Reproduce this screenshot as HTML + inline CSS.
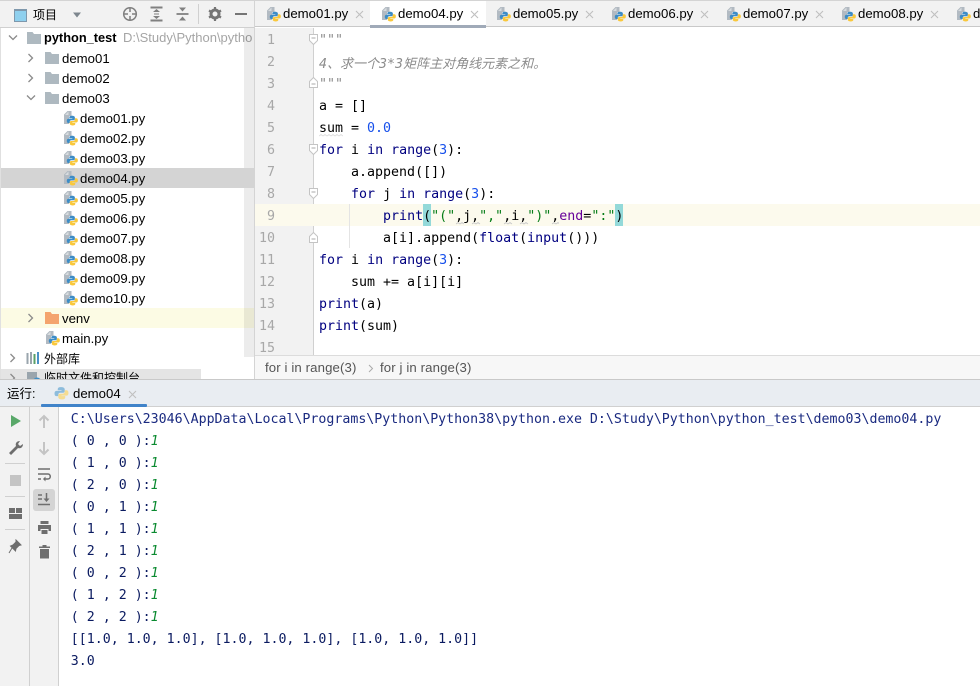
<!DOCTYPE html>
<html><head><meta charset="utf-8"><style>
html,body{margin:0;padding:0}
body{width:980px;height:686px;overflow:hidden;background:#fff;position:relative;font-family:"Liberation Sans","Noto Sans CJK SC",sans-serif;color:#000}
div,span.a,svg.a{position:absolute}
.t{font-size:13.2px;line-height:20px;white-space:nowrap;height:20px}
.m{font-family:"DejaVu Sans Mono",monospace;font-size:13.3px;line-height:22px;height:22px;white-space:pre;color:#000;margin-top:2px}
.con{font-size:13.27px;left:70.8px}
.n{font-family:"DejaVu Sans Mono",monospace;font-size:13.3px;line-height:22px;height:22px;color:#a8a8a8;width:20px;text-align:right;left:255px;margin-top:2px}
.k{color:#000080}.b{color:#1750eb}.g{color:#067d17}.p{color:#660099}
.cj{font-family:"Noto Sans CJK SC",sans-serif;font-size:13px}
.tab{font-size:13.2px;line-height:20px;top:4px;white-space:nowrap}
.o{color:#1a2a80}
.u{color:#0a1a60}
.u i{color:#0a8a30}
</style></head><body>
<svg width="0" height="0" style="position:absolute"><defs>
<symbol id="py" viewBox="0 0 16 16"><path d="M1 4.500L4.500 1H8.500V6H6V14H1z" fill="#b2bac2"/><path d="M5.500 1.500V5H2z" fill="#d8dcdf"/><g transform="translate(2.100 1.900) scale(.85)"><path d="M8 4.500c-2.500 0-3 1-3 2v1h3.500v.5H4c-1.500 0-2 1-2 2.500s.5 2.500 2 2.500h1.500v-1.500c0-1 .8-1.700 1.700-1.700h2.800c1 0 1.500-.7 1.500-1.500V6.500c0-1-1-2-3.500-2z" fill="#3c8cc6"/><path d="M8 4.500c-2.500 0-3 1-3 2v1h3.500v.5H4c-1.500 0-2 1-2 2.500s.5 2.500 2 2.500h1.500v-1.500c0-1 .8-1.700 1.700-1.700h2.800c1 0 1.500-.7 1.500-1.500V6.500c0-1-1-2-3.500-2z" fill="#f9c83c" transform="rotate(180 8.500 10.250)"/></g></symbol>
<symbol id="fd" viewBox="0 0 16 14"><path d="M1 1h5.500l1.500 2h7v10H1z" fill="#aeb9c0"/></symbol>
</defs></svg>

<!-- sidebar -->
<div style="left:0;top:0;width:255px;height:380px;background:#fff;overflow:hidden">
<div style="left:0;top:0;width:255px;height:27px;background:#f2f2f2;border-bottom:1px solid #d0d0d0"></div>
<div style="left:0;top:0;width:255px;height:1px;background:#d4d4d4"></div>
<div style="left:0;top:28px;width:1px;height:352px;background:#e0e0e0"></div>
<div style="left:14px;top:9px;width:11px;height:10px;background:#8fd0ee;border:1px solid #7f98ac;border-top-width:2px"></div>
<div class="t" style="left:33px;top:5px;font-size:12px">项目</div>
<svg class="a" style="left:72px;top:12px" width="10" height="6"><path d="M1 .5h8l-4 5z" fill="#7d868e"/></svg>
<svg class="a" style="left:122px;top:6px" width="16" height="16"><circle cx="8" cy="8" r="6.300" fill="none" stroke="#808080" stroke-width="1.500"/><path d="M8 2v4M8 10v4M2 8h4M10 8h4" stroke="#808080" stroke-width="1.500"/></svg>
<svg class="a" style="left:149px;top:6px" width="16" height="16"><path d="M1.500 1.500h12M1.500 14.500h12" stroke="#808080" stroke-width="2"/><path d="M4 6l3.500-3 3.500 3zM4 10l3.500 3 3.500-3z" fill="#808080"/><path d="M5 8h5" stroke="#808080"/></svg>
<svg class="a" style="left:175px;top:6px" width="16" height="16"><path d="M1.500 8h12" stroke="#808080" stroke-width="1.800"/><path d="M4 1.500l3.500 4 3.500-4zM4 14.500l3.500-4 3.500 4z" fill="#808080"/></svg>
<div style="left:198px;top:4px;width:1px;height:20px;background:#d0d0d0"></div>
<svg class="a" style="left:208px;top:6px" width="16" height="16"><circle cx="7" cy="8" r="4" fill="none" stroke="#757575" stroke-width="3"/><path d="M7 1v3M7 12v3M1 4.500l2.500 1.500M10.500 10l2.500 1.500M1 11.500L3.500 10M10.500 6L13 4.500" stroke="#757575" stroke-width="2.200"/></svg>
<div style="left:235px;top:13px;width:12px;height:2px;background:#757575"></div>

<div style="left:1px;top:308px;width:254px;height:20px;background:#fcfbe4"></div>
<div style="left:1px;top:369px;width:200px;height:11px;background:#e4e4e4"></div>

<svg class="a" style="left:8px;top:34px" width="10" height="8"><path d="M1 1.500l4 4 4-4" fill="none" stroke="#8b8b8b" stroke-width="1.300"/></svg>
<svg class="a" style="left:26px;top:31px" width="16" height="14"><use href="#fd"/></svg>
<div class="t" style="left:44px;top:28px;font-weight:bold;font-size:12.800px">python_test</div>
<div class="t" style="left:123px;top:28px;color:#a5a5a5;font-size:13px;width:130px;overflow:hidden">D:\Study\Python\pytho</div>

<svg class="a" style="left:27px;top:53px" width="8" height="10"><path d="M1.500 1l4 4-4 4" fill="none" stroke="#8b8b8b" stroke-width="1.300"/></svg>
<svg class="a" style="left:44px;top:51px" width="16" height="14"><use href="#fd"/></svg>
<div class="t" style="left:62px;top:49px">demo01</div>
<svg class="a" style="left:27px;top:73px" width="8" height="10"><path d="M1.500 1l4 4-4 4" fill="none" stroke="#8b8b8b" stroke-width="1.300"/></svg>
<svg class="a" style="left:44px;top:71px" width="16" height="14"><use href="#fd"/></svg>
<div class="t" style="left:62px;top:69px">demo02</div>
<svg class="a" style="left:26px;top:94px" width="10" height="8"><path d="M1 1.500l4 4 4-4" fill="none" stroke="#8b8b8b" stroke-width="1.300"/></svg>
<svg class="a" style="left:44px;top:91px" width="16" height="14"><use href="#fd"/></svg>
<div class="t" style="left:62px;top:89px">demo03</div>

<div style="left:244px;top:28px;width:11px;height:329px;background:rgba(0,0,0,.075)"></div>
<div style="left:1px;top:168px;width:254px;height:20px;background:#d4d4d4"></div>

<svg class="a" style="left:63px;top:110px" width="16" height="16"><use href="#py"/></svg><div class="t" style="left:80px;top:109px">demo01.py</div>
<svg class="a" style="left:63px;top:130px" width="16" height="16"><use href="#py"/></svg><div class="t" style="left:80px;top:129px">demo02.py</div>
<svg class="a" style="left:63px;top:150px" width="16" height="16"><use href="#py"/></svg><div class="t" style="left:80px;top:149px">demo03.py</div>
<svg class="a" style="left:63px;top:170px" width="16" height="16"><use href="#py"/></svg><div class="t" style="left:80px;top:169px">demo04.py</div>
<svg class="a" style="left:63px;top:190px" width="16" height="16"><use href="#py"/></svg><div class="t" style="left:80px;top:189px">demo05.py</div>
<svg class="a" style="left:63px;top:210px" width="16" height="16"><use href="#py"/></svg><div class="t" style="left:80px;top:209px">demo06.py</div>
<svg class="a" style="left:63px;top:230px" width="16" height="16"><use href="#py"/></svg><div class="t" style="left:80px;top:229px">demo07.py</div>
<svg class="a" style="left:63px;top:250px" width="16" height="16"><use href="#py"/></svg><div class="t" style="left:80px;top:249px">demo08.py</div>
<svg class="a" style="left:63px;top:270px" width="16" height="16"><use href="#py"/></svg><div class="t" style="left:80px;top:269px">demo09.py</div>
<svg class="a" style="left:63px;top:290px" width="16" height="16"><use href="#py"/></svg><div class="t" style="left:80px;top:289px">demo10.py</div>

<svg class="a" style="left:27px;top:313px" width="8" height="10"><path d="M1.500 1l4 4-4 4" fill="none" stroke="#8b8b8b" stroke-width="1.300"/></svg>
<svg class="a" style="left:44px;top:311px" width="16" height="14"><path d="M1 1h5.500l1.500 2h7v10H1z" fill="#f4a46e"/></svg>
<div class="t" style="left:62px;top:309px">venv</div>
<svg class="a" style="left:45px;top:330px" width="16" height="16"><use href="#py"/></svg><div class="t" style="left:62px;top:329px">main.py</div>

<svg class="a" style="left:9px;top:353px" width="8" height="10"><path d="M1.500 1l4 4-4 4" fill="none" stroke="#8b8b8b" stroke-width="1.300"/></svg>
<svg class="a" style="left:26px;top:351px" width="16" height="14"><path d="M1.500 2v11" stroke="#9aa5ad" stroke-width="2"/><path d="M5 1v12" stroke="#9aa5ad" stroke-width="2"/><path d="M8.500 3v10" stroke="#5aa06a" stroke-width="2"/><path d="M12 1v12" stroke="#4a90c8" stroke-width="2"/></svg>
<div class="t" style="left:44px;top:349px;font-size:12px">外部库</div>

<svg class="a" style="left:9px;top:373px" width="8" height="10"><path d="M1.500 1l4 4-4 4" fill="none" stroke="#8b8b8b" stroke-width="1.300"/></svg>
<svg class="a" style="left:26px;top:371px" width="16" height="14"><rect x="1" y="1" width="10" height="9" fill="#9aa5ad"/><circle cx="11" cy="11" r="4.500" fill="#3d8fc8"/></svg>
<div class="t" style="left:44px;top:368px;font-size:12px">临时文件和控制台</div>
</div>

<!-- editor tabs -->
<div style="left:255px;top:0;width:725px;height:25px;background:#f2f2f2;border-top:1px solid #d4d4d4;border-bottom:1px solid #c9c9c9"></div>
<div style="left:254px;top:0;width:1px;height:380px;background:#d4d4d4"></div>
<div style="left:370px;top:1px;width:116px;height:27px;background:#fff"></div>
<div style="left:370px;top:25px;width:116px;height:3px;background:#a0aab8"></div>

<svg class="a" style="left:266px;top:6px" width="16" height="16"><use href="#py"/></svg><div class="tab" style="left:283px">demo01.py</div>
<svg class="a" style="left:381px;top:6px" width="16" height="16"><use href="#py"/></svg><div class="tab" style="left:398px">demo04.py</div>
<svg class="a" style="left:496px;top:6px" width="16" height="16"><use href="#py"/></svg><div class="tab" style="left:513px">demo05.py</div>
<svg class="a" style="left:611px;top:6px" width="16" height="16"><use href="#py"/></svg><div class="tab" style="left:628px">demo06.py</div>
<svg class="a" style="left:726px;top:6px" width="16" height="16"><use href="#py"/></svg><div class="tab" style="left:743px">demo07.py</div>
<svg class="a" style="left:841px;top:6px" width="16" height="16"><use href="#py"/></svg><div class="tab" style="left:858px">demo08.py</div>
<svg class="a" style="left:956px;top:6px" width="16" height="16"><use href="#py"/></svg><div class="tab" style="left:973px">d</div>
<svg class="a" style="left:355px;top:10px" width="9" height="9"><path d="M1 1l7 7M8 1L1 8" stroke="#c0c0c0" stroke-width="1.100"/></svg>
<svg class="a" style="left:470px;top:10px" width="9" height="9"><path d="M1 1l7 7M8 1L1 8" stroke="#c0c0c0" stroke-width="1.100"/></svg>
<svg class="a" style="left:585px;top:10px" width="9" height="9"><path d="M1 1l7 7M8 1L1 8" stroke="#c0c0c0" stroke-width="1.100"/></svg>
<svg class="a" style="left:700px;top:10px" width="9" height="9"><path d="M1 1l7 7M8 1L1 8" stroke="#c0c0c0" stroke-width="1.100"/></svg>
<svg class="a" style="left:815px;top:10px" width="9" height="9"><path d="M1 1l7 7M8 1L1 8" stroke="#c0c0c0" stroke-width="1.100"/></svg>
<svg class="a" style="left:930px;top:10px" width="9" height="9"><path d="M1 1l7 7M8 1L1 8" stroke="#c0c0c0" stroke-width="1.100"/></svg>

<!-- editor -->
<div style="left:255px;top:28px;width:58px;height:327px;background:#f2f2f2"></div>
<div style="left:313px;top:28px;width:1px;height:327px;background:#d0d0d0"></div>
<div style="left:255px;top:204px;width:725px;height:22px;background:#fcfaed"></div>
<div style="left:423px;top:204px;width:8px;height:22px;background:#93d9d9"></div>
<div style="left:615px;top:204px;width:8px;height:22px;background:#93d9d9"></div>
<div style="left:349px;top:204px;width:1px;height:44px;background:#e4e4e4"></div>

<div class="n" style="top:28px">1</div><div class="n" style="top:50px">2</div><div class="n" style="top:72px">3</div><div class="n" style="top:94px">4</div><div class="n" style="top:116px">5</div><div class="n" style="top:138px">6</div><div class="n" style="top:160px">7</div><div class="n" style="top:182px">8</div><div class="n" style="top:204px">9</div><div class="n" style="top:226px">10</div><div class="n" style="top:248px">11</div><div class="n" style="top:270px">12</div><div class="n" style="top:292px">13</div><div class="n" style="top:314px">14</div><div class="n" style="top:336px">15</div>

<svg class="a" style="left:309px;top:34px" width="9" height="11"><path d="M.5.5h8v6l-4 4-4-4z" fill="#fff" stroke="#c4c4c4"/><path d="M2.500 4h4" stroke="#aaa"/></svg>
<svg class="a" style="left:309px;top:77px" width="9" height="11"><path d="M.5 10.500h8v-6l-4-4-4 4z" fill="#fff" stroke="#c4c4c4"/><path d="M2.500 7h4" stroke="#aaa"/></svg>
<svg class="a" style="left:309px;top:144px" width="9" height="11"><path d="M.5.5h8v6l-4 4-4-4z" fill="#fff" stroke="#c4c4c4"/><path d="M2.500 4h4" stroke="#aaa"/></svg>
<svg class="a" style="left:309px;top:188px" width="9" height="11"><path d="M.5.5h8v6l-4 4-4-4z" fill="#fff" stroke="#c4c4c4"/><path d="M2.500 4h4" stroke="#aaa"/></svg>
<svg class="a" style="left:309px;top:232px" width="9" height="11"><path d="M.5 10.500h8v-6l-4-4-4 4z" fill="#fff" stroke="#c4c4c4"/><path d="M2.500 7h4" stroke="#aaa"/></svg>

<div class="m" style="left:319px;top:28px;color:#8c8c8c;font-style:italic">"""</div>
<div class="m" style="left:319px;top:50px;color:#8c8c8c;font-style:italic">4<span class="cj">、求一个</span>3*3<span class="cj">矩阵主对角线元素之和。</span></div>
<div class="m" style="left:319px;top:72px;color:#8c8c8c;font-style:italic">"""</div>
<div class="m" style="left:319px;top:94px">a = []</div>
<div class="m" style="left:319px;top:116px">sum = <span class="b">0.0</span></div>
<div class="m" style="left:319px;top:138px"><span class="k">for</span> i <span class="k">in</span> <span class="k">range</span>(<span class="b">3</span>):</div>
<div class="m" style="left:319px;top:160px">    a.append([])</div>
<div class="m" style="left:319px;top:182px">    <span class="k">for</span> j <span class="k">in</span> <span class="k">range</span>(<span class="b">3</span>):</div>
<div class="m" style="left:319px;top:204px">        <span class="k">print</span>(<span class="g">"("</span>,j,<span class="g">","</span>,i,<span class="g">")"</span>,<span class="p">end</span>=<span class="g">":"</span>)</div>
<div class="m" style="left:319px;top:226px">        a[i].append(<span class="k">float</span>(<span class="k">input</span>()))</div>
<div class="m" style="left:319px;top:248px"><span class="k">for</span> i <span class="k">in</span> <span class="k">range</span>(<span class="b">3</span>):</div>
<div class="m" style="left:319px;top:270px">    sum += a[i][i]</div>
<div class="m" style="left:319px;top:292px"><span class="k">print</span>(a)</div>
<div class="m" style="left:319px;top:314px"><span class="k">print</span>(sum)</div>

<svg class="a" style="left:319px;top:134px" width="24" height="3"><path d="M0 2l2-1.500 2 1.500 2-1.500 2 1.500 2-1.500 2 1.500 2-1.500 2 1.500 2-1.500 2 1.500 2-1.500 2 1.500" fill="none" stroke="#dcdcdc" stroke-width=".8"/></svg>
<svg class="a" style="left:455px;top:222px" width="104" height="3" fill="none" stroke="#c8c8c8" stroke-width=".8"><path d="M1 2l2-1.500 2 1.500 2-1.500 2 1.500M17 2l2-1.500 2 1.500 2-1.500 2 1.500M49 2l2-1.500 2 1.500 2-1.500 2 1.500M65 2l2-1.500 2 1.500 2-1.500 2 1.500M97 2l2-1.500 2 1.500 2-1.500 2 1.500"/></svg>

<!-- breadcrumb -->
<div style="left:255px;top:355px;width:725px;height:24px;background:#f7f7f7;border-top:1px solid #dcdcdc;box-sizing:border-box"></div>
<div style="left:265px;top:358px;font-size:13.2px;letter-spacing:.12px;line-height:20px;color:#555;white-space:nowrap">for i in range(3)</div>
<svg class="a" style="left:368px;top:364px" width="6" height="9"><path d="M1 1l3.500 3.500L1 8" fill="none" stroke="#aaa"/></svg>
<div style="left:380px;top:358px;font-size:13.2px;letter-spacing:.12px;line-height:20px;color:#555;white-space:nowrap">for j in range(3)</div>

<!-- run -->
<div style="left:0;top:379px;width:980px;height:1px;background:#c9c9c9"></div>
<div style="left:0;top:380px;width:980px;height:26px;background:#e9edf2"></div>
<div style="left:0;top:406px;width:980px;height:1px;background:#d0d0d0"></div>
<div style="left:7px;top:384px;font-size:12.500px;line-height:20px;white-space:nowrap">运行:</div>
<svg class="a" style="left:54px;top:386px" width="15" height="15" viewBox="1.500 3.500 14 14"><path d="M8 4.500c-2.500 0-3 1-3 2v1h3.500v.5H4c-1.500 0-2 1-2 2.500s.5 2.500 2 2.500h1.500v-1.500c0-1 .8-1.700 1.700-1.700h2.800c1 0 1.500-.7 1.500-1.500V6.500c0-1-1-2-3.500-2z" fill="#8dbcdc"/><path d="M8 4.500c-2.500 0-3 1-3 2v1h3.500v.5H4c-1.500 0-2 1-2 2.500s.5 2.500 2 2.500h1.500v-1.500c0-1 .8-1.700 1.700-1.700h2.800c1 0 1.500-.7 1.500-1.500V6.500c0-1-1-2-3.500-2z" fill="#f4dc92" transform="rotate(180 8.500 10.250)"/></svg>
<div style="left:73px;top:384px;font-size:13.2px;line-height:20px">demo04</div>
<svg class="a" style="left:128px;top:390px" width="9" height="9"><path d="M1 1l7 7M8 1L1 8" stroke="#c0c0c0" stroke-width="1.100"/></svg>
<div style="left:41px;top:404px;width:106px;height:3px;background:#4083c9;border-radius:1px"></div>

<div style="left:0;top:407px;width:58px;height:279px;background:#f2f2f2"></div>
<div style="left:29px;top:407px;width:1px;height:279px;background:#d0d0d0"></div>
<div style="left:58px;top:407px;width:1px;height:279px;background:#d0d0d0"></div>
<svg class="a" style="left:10px;top:414px" width="12" height="14"><path d="M1 1l10 6-10 6z" fill="#59a869"/></svg>
<svg class="a" style="left:7px;top:439px" width="17" height="17"><path d="M2 14L9 7c-1-3 1-5 4-5l-2 3 2 2 3-2c0 3-2 5-5 4l-7 7z" fill="#6e6e6e"/></svg>
<div style="left:5px;top:463px;width:20px;height:1px;background:#d0d0d0"></div>
<div style="left:10px;top:475px;width:11px;height:11px;background:#c4c4c4"></div>
<div style="left:5px;top:496px;width:20px;height:1px;background:#d0d0d0"></div>
<svg class="a" style="left:9px;top:508px" width="13" height="11"><path d="M0 0h6v5H0zM7 0h6v5H7zM0 6h13v5H0z" fill="#6e6e6e"/></svg>
<div style="left:5px;top:529px;width:20px;height:1px;background:#d0d0d0"></div>
<svg class="a" style="left:7px;top:539px" width="16" height="16"><path d="M9 1l5 5-2 .5-3 3-.5 2.500-5-5L6 6l3-3zM5 9l-3 5" fill="#6e6e6e" stroke="#6e6e6e"/></svg>

<svg class="a" style="left:38px;top:414px" width="12" height="15"><path d="M6 14V2M1.500 6.500L6 2l4.500 4.500" fill="none" stroke="#c4c4c4" stroke-width="2"/></svg>
<svg class="a" style="left:38px;top:441px" width="12" height="15"><path d="M6 1v12M1.500 8.500L6 13l4.500-4.500" fill="none" stroke="#c4c4c4" stroke-width="2"/></svg>
<svg class="a" style="left:37px;top:467px" width="15" height="15"><path d="M1 2h12M1 7h10c3 0 3 5 0 5H7M1 12h3" fill="none" stroke="#6e6e6e" stroke-width="1.500"/><path d="M8.500 9.500L6 12l2.500 2.500z" fill="#6e6e6e"/></svg>
<div style="left:33px;top:489px;width:22px;height:22px;background:#d4d4d4;border-radius:3px"></div>
<svg class="a" style="left:37px;top:492px" width="15" height="15"><path d="M1 3h4M1 7h4M1 12.500h12" stroke="#6e6e6e" stroke-width="1.500"/><path d="M9.500 1v7" stroke="#6e6e6e" stroke-width="1.500"/><path d="M6.500 6.500h6L9.500 10z" fill="#6e6e6e"/></svg>
<svg class="a" style="left:37px;top:520px" width="15" height="15"><path d="M3.500 1h8v3h-8zM1 5h13v6h-2.500V9h-8v2H1zM4.500 10h6v4h-6z" fill="#6e6e6e"/></svg>
<svg class="a" style="left:38px;top:544px" width="13" height="15"><path d="M4.500 1h4v1.500H12V4H1V2.500h3.500zM2 5h9v9.500H2z" fill="#6e6e6e"/></svg>

<div class="m con o" style="top:407px">C:\Users\23046\AppData\Local\Programs\Python\Python38\python.exe D:\Study\Python\python_test\demo03\demo04.py</div>
<div class="m con u" style="top:429px">( 0 , 0 ):<i>1</i></div>
<div class="m con u" style="top:451px">( 1 , 0 ):<i>1</i></div>
<div class="m con u" style="top:473px">( 2 , 0 ):<i>1</i></div>
<div class="m con u" style="top:495px">( 0 , 1 ):<i>1</i></div>
<div class="m con u" style="top:517px">( 1 , 1 ):<i>1</i></div>
<div class="m con u" style="top:539px">( 2 , 1 ):<i>1</i></div>
<div class="m con u" style="top:561px">( 0 , 2 ):<i>1</i></div>
<div class="m con u" style="top:583px">( 1 , 2 ):<i>1</i></div>
<div class="m con u" style="top:605px">( 2 , 2 ):<i>1</i></div>
<div class="m con u" style="top:627px">[[1.0, 1.0, 1.0], [1.0, 1.0, 1.0], [1.0, 1.0, 1.0]]</div>
<div class="m con u" style="top:649px">3.0</div>
</body></html>
